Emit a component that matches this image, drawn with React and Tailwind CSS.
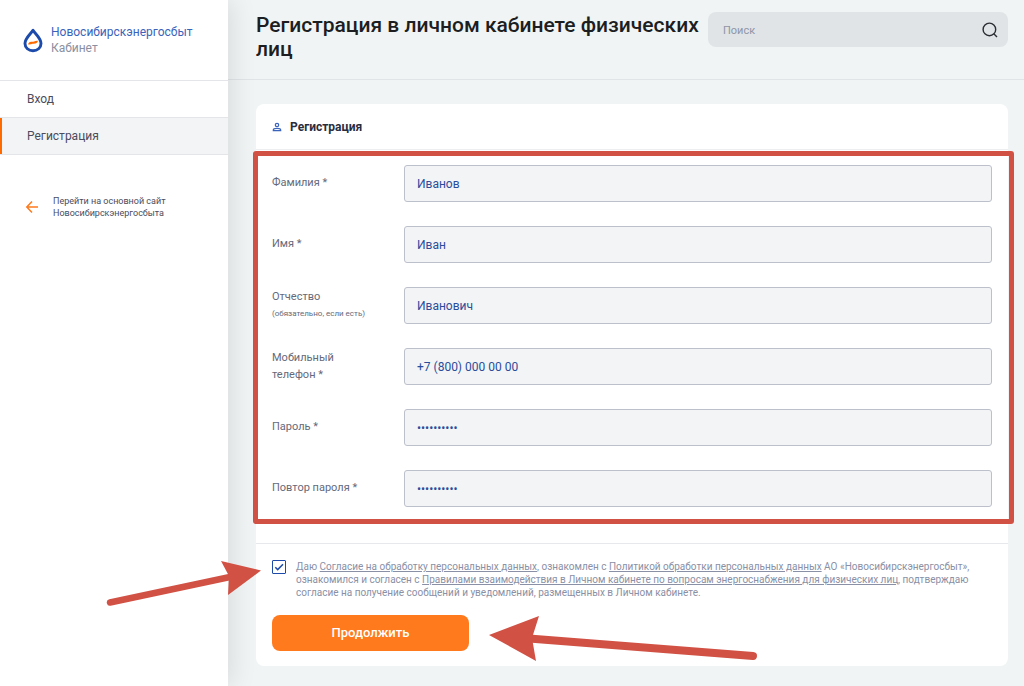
import { useState } from "react";

const fields = [
    { name: "lastName", label: "Фамилия *", type: "text", value: "Иванов" },
    { name: "firstName", label: "Имя *", type: "text", value: "Иван" },
    { name: "middleName", label: "Отчество", note: "(обязательно, если есть)", type: "text", value: "Иванович" },
    { name: "phone", label: "Мобильный телефон *", type: "tel", value: "+7 (800) 000 00 00" },
    { name: "password", label: "Пароль *", type: "password", value: "0123456789" },
    { name: "passwordRepeat", label: "Повтор пароля *", type: "password", value: "0123456789" },
];

const Logo = () => (
    <svg viewBox="0 0 20 25" fill="none" className="w-5 h-[25px] shrink-0">
        <path d="M10 2.2C8 5.6 2 10 2 15.4C2 19.8 5.6 22.8 10 22.8C14.4 22.8 18 19.8 18 15.4C18 10 12 5.6 10 2.2Z" stroke="#1c4bab" strokeWidth="2.9" strokeLinejoin="round" />
        <path d="M5 16.2C6.8 12.8 9 14.2 11 13.6C12.6 13.1 13.8 12.5 15 13C13.6 16.2 11.6 15.4 9.6 15.8C7.8 16.2 6.4 16.9 5 16.2Z" fill="#ff6a00" />
    </svg>
);

const Sidebar = () => (
    <aside className="relative z-10 w-[228px] shrink-0 bg-white shadow-[4px_0_24px_rgba(0,0,0,0.1)]">
        <a href="/" className="flex h-20 items-center gap-2 pl-[23px]">
            <Logo />
            <span className="text-[12px] leading-4">
                <span className="block text-[#3a63bb]">Новосибирскэнергосбыт</span>
                <span className="block text-[#8a90a2]">Кабинет</span>
            </span>
        </a>
        <nav className="text-[12px] text-[#4a4c5c]">
            <a href="/login" className="flex h-[37px] items-center border-t border-[#e3e5e8] pl-[27px]">Вход</a>
            <a href="/register" className="flex h-[38px] items-center border-y border-[#e3e5e8] bg-[#f3f4f6] pl-[27px] shadow-[inset_2px_0_0_#ff6a00]">Регистрация</a>
        </nav>
        <a href="/main" className="mt-10 flex items-center gap-[15px] pl-[26px] text-[9px] leading-3 text-[#4a4c5c]">
            <svg viewBox="0 0 12 12" fill="none" stroke="#ff7a1c" strokeWidth="1.5" className="size-3 shrink-0">
                <path d="M12 6H.8M6 .6L.8 6L6 11.4" />
            </svg>
            <span>Перейти на основной сайт<br />Новосибирскэнергосбыта</span>
        </a>
    </aside>
);

const Header = () => (
    <header className="flex h-20 items-start border-b border-[#e0e4e7] pt-3 pr-4 pl-7">
        <h1 className="flex-1 pt-px text-[21px] leading-6 font-medium text-[#1c1e22]">Регистрация в личном кабинете физических лиц</h1>
        <form className="flex h-[35px] w-[300px] shrink-0 items-center rounded-lg bg-[#e0e4e7] pr-2.5 pl-[15px]">
            <input type="text" aria-label="Поиск" placeholder="Поиск" className="h-full min-w-0 flex-1 bg-transparent pt-0.5 text-[11px] outline-none placeholder:text-[#8f95a5]" />
            <button type="button" aria-label="Найти" className="cursor-pointer">
                <svg viewBox="0 0 16 16" fill="none" stroke="#2b2d33" strokeWidth="1.4" className="size-4">
                    <circle cx="7.4" cy="7.4" r="6.3" />
                    <path d="M11.8 11.8L15 15" />
                </svg>
            </button>
        </form>
    </header>
);

const Field = ({ field }) => {
    const [value, setValue] = useState(field.value);

    return (
        <div className="flex h-[37px] items-center">
            <label htmlFor={field.name} className="w-[132px] shrink-0 pr-8 pb-0.5 text-[11px] leading-[17px] text-[#65697a]">
                {field.label}
                {field.note && <span className="block text-[8px] leading-[17px] whitespace-nowrap">{field.note}</span>}
            </label>
            <input
                id={field.name}
                type={field.type}
                value={value}
                onChange={(e) => setValue(e.target.value)}
                className="h-full min-w-0 flex-1 rounded-[3px] border border-[#bcc0cb] bg-[#f3f4f6] px-3 text-[12px] text-[#2a4d9b] outline-none"
            />
        </div>
    );
};

const Agreement = () => {
    const [accepted, setAccepted] = useState(true);

    return (
        <div className="relative flex items-start gap-2.5">
            <svg viewBox="0 0 156 50" className="pointer-events-none absolute -top-1 right-full z-20 mr-2.5 w-[156px] text-[#d15145]">
                <path d="M4 46.5L124 21" stroke="currentColor" strokeWidth="6.4" strokeLinecap="round" />
                <path d="M155 14.5L115 5L123 20L122 39Z" fill="currentColor" />
            </svg>
            <span className="relative flex shrink-0">
                <input
                    id="agreement"
                    type="checkbox"
                    checked={accepted}
                    onChange={(e) => setAccepted(e.target.checked)}
                    className="size-3.5 appearance-none rounded-[1px] border border-[#1c4bab] bg-white"
                />
                {accepted && (
                    <svg viewBox="0 0 14 14" fill="none" stroke="#1c4bab" strokeWidth="1.5" className="pointer-events-none absolute inset-0 size-3.5">
                        <path d="M3.3 7.2L5.7 9.6L11 4.3" />
                    </svg>
                )}
            </span>
            <label htmlFor="agreement" className="text-[10px] leading-[13px] text-[#8a90a5]">
                Даю <a href="/consent" className="underline">Согласие на обработку персональных данных</a>, ознакомлен с <a href="/policy" className="underline">Политикой обработки персональных данных</a> АО «Новосибирскэнергосбыт», ознакомился и согласен с <a href="/rules" className="underline">Правилами взаимодействия в Личном кабинете по вопросам энергоснабжения для физических лиц</a>, подтверждаю согласие на получение сообщений и уведомлений, размещенных в Личном кабинете.
            </label>
        </div>
    );
};

const App = () => {
    return (
        <div className="flex min-h-screen overflow-hidden bg-[#f0f4f5] font-[Roboto,sans-serif]">
            <Sidebar />
            <main className="min-w-0 flex-1">
                <Header />
                <form className="mt-6 mr-4 mb-5 ml-7 rounded-lg bg-white">
                    <h2 className="flex h-[46px] items-center gap-2 border-b border-[#eceef0] px-4 text-[12px] font-bold text-[#2a2d3e]">
                        <svg viewBox="0 0 10 10" fill="none" stroke="#3a63bb" strokeWidth="1.2" className="size-2.5">
                            <circle cx="5" cy="3" r="1.7" />
                            <path d="M1.3 8.7V8C1.3 6.8 3.4 6.3 5 6.3S8.7 6.8 8.7 8V8.7Z" />
                        </svg>
                        Регистрация
                    </h2>
                    <div className="relative flex flex-col gap-6 px-4 pt-[15px] pb-9">
                        {fields.map((field) => (
                            <Field key={field.name} field={field} />
                        ))}
                        <div className="pointer-events-none absolute top-px -right-1.5 bottom-[19px] -left-[3px] rounded-[3px] border-5 border-[#d15145]" />
                    </div>
                    <div className="border-t border-[#e6e8eb] px-4 pt-4 pb-[15px]">
                        <Agreement />
                        <div className="mt-4 flex">
                            <div className="relative">
                                <button type="button" className="h-9 w-[197px] cursor-pointer rounded-lg bg-[#ff7a1c] text-[13px] font-medium text-white">Продолжить</button>
                                <svg viewBox="0 0 270 46" className="pointer-events-none absolute top-px left-full z-20 ml-5 w-[270px] text-[#d15145]">
                                    <path d="M40 22.5L264 40" stroke="currentColor" strokeWidth="8" strokeLinecap="round" />
                                    <path d="M0 19L50 0L43 22L47 45Z" fill="currentColor" />
                                </svg>
                            </div>
                        </div>
                    </div>
                </form>
            </main>
        </div>
    );
};

export default App;
